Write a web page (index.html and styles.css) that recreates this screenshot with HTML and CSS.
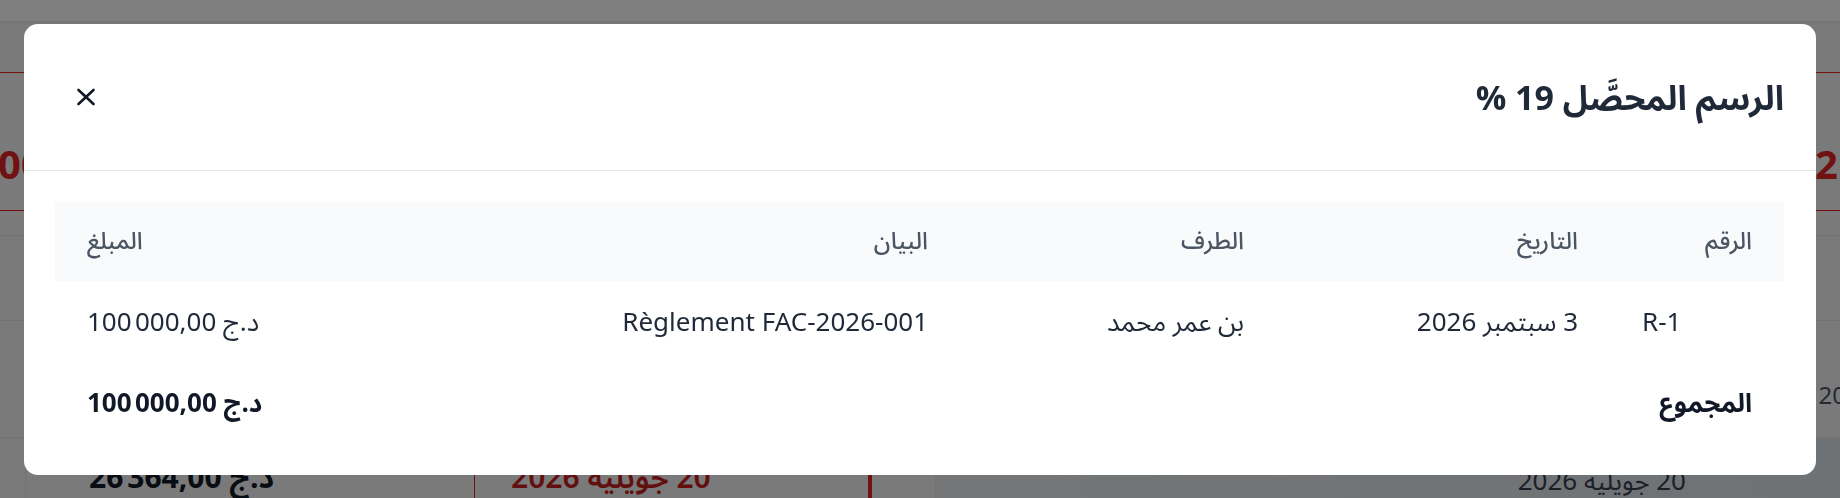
FILE: index.html
```html
<!DOCTYPE html>
<html lang="ar" dir="rtl">
<head>
<meta charset="utf-8">
<title>الرسم المحصَّل</title>
<link rel="stylesheet" href="styles.css">
</head>
<body>
	<!-- page behind the dialog -->
	<div class="page" dir="ltr">
		<div class="topbar"></div>
		<div class="kpi-band">
			<span class="kpi-left">000,00</span>
			<span class="kpi-right">12</span>
		</div>
		<div class="bg-row bg-row-a"></div>
		<div class="bg-row bg-row-b"><span class="bg-date">20</span></div>
		<div class="bg-cards">
			<div class="bg-card bg-card-total"><span dir="ltr">26&#8239;364,00 د.ج</span></div>
			<div class="bg-card bg-card-due"><span dir="rtl">20 جويلية 2026</span></div>
			<div class="bg-card bg-card-list"><span dir="rtl">20 جويلية 2026</span></div>
		</div>
	</div>

	<div class="overlay">
		<div class="modal">
			<div class="modal-head">
				<h2 class="modal-title">الرسم المحصَّل 19 %</h2>
				<button class="close-btn" type="button" aria-label="إغلاق">
					<svg width="20" height="20" viewBox="0 0 20 20" fill="none" stroke="currentColor" stroke-width="2.6" stroke-linecap="round">
						<line x1="2.5" y1="3" x2="17.5" y2="17"/>
						<line x1="17.5" y1="3" x2="2.5" y2="17"/>
					</svg>
				</button>
			</div>
			<div class="modal-body">
				<table class="tx-table">
					<colgroup>
						<col class="c-ref">
						<col class="c-date">
						<col class="c-party">
						<col class="c-label">
						<col class="c-amount">
					</colgroup>
					<thead>
						<tr>
							<th>الرقم</th>
							<th>التاريخ</th>
							<th>الطرف</th>
							<th>البيان</th>
							<th class="num">المبلغ</th>
						</tr>
					</thead>
					<tbody>
						<tr>
							<td class="ref" dir="ltr">R-1</td>
							<td>3 سبتمبر 2026</td>
							<td>بن عمر محمد</td>
							<td>Règlement FAC-2026-001</td>
							<td class="num"><span dir="ltr">100&#8239;000,00 د.ج</span></td>
						</tr>
					</tbody>
					<tfoot>
						<tr>
							<td colspan="4">المجموع</td>
							<td class="num"><span dir="ltr">100&#8239;000,00 د.ج</span></td>
						</tr>
					</tfoot>
				</table>
			</div>
		</div>
	</div>
</body>
</html>
```

FILE: styles.css
```css
html, body {
	margin: 0;
	padding: 0;
}
body {
	width: 1840px;
	height: 498px;
	overflow: hidden;
	background: #f4f4f5;
	font-family: "Noto Sans Arabic", "Noto Sans", "DejaVu Sans", sans-serif;
	color: #1f2937;
}

/* ---------- page behind the overlay ---------- */
.page {
	display: flex;
	flex-direction: column;
	height: 498px;
}
.topbar {
	height: 22px;
	background: #fff;
	box-shadow: 0 1px 3px rgba(0,0,0,.08);
}
.kpi-band {
	margin-top: 51px;
	height: 144px;
	border-top: 1px solid #e02424;
	border-bottom: 1px solid #e02424;
	display: flex;
	justify-content: space-between;
	align-items: flex-start;
	padding-top: 71px;
	box-sizing: border-box;
	font-family: "Noto Sans", sans-serif;
	font-size: 40px;
	line-height: 40px;
	font-weight: 700;
	color: #e02424;
}
.kpi-left { margin-left: -2px; }
.kpi-right { padding-right: 2px; }
.bg-row {
	border-top: 1px solid #e5e7eb;
}
.bg-row-a {
	margin-top: 24px;
	height: 89px;
}
.bg-row-b {
	height: 121px;
	display: flex;
	justify-content: flex-end;
	align-items: flex-start;
	padding-top: 57px;
	box-sizing: border-box;
}
.bg-date {
	font-family: "Noto Sans", sans-serif;
	font-size: 24px;
	color: #4b5563;
	margin-right: -6px;
}
.bg-cards {
	display: flex;
	border-top: 1px solid #e5e7eb;
	padding-left: 25px;
	height: 60px;
}
.bg-card {
	box-sizing: border-box;
	padding-top: 21px;
	font-size: 30px;
	line-height: 40px;
}
.bg-card-total {
	width: 425px;
	border-left: 1px solid #e5e7eb;
	padding-left: 63px;
	font-weight: 700;
	color: #111827;
}
.bg-card-due {
	width: 398px;
	margin-left: 24px;
	border-left: 1px solid #e02424;
	border-right: 4px solid #e02424;
	padding-left: 36px;
	color: #c81e1e;
	font-weight: 600;
}
.bg-card-list {
	flex: 1;
	margin-left: 63px;
	border-left: 1px solid #e5e7eb;
	background: linear-gradient(90deg, #e7ebee, #dfe5ea);
	display: flex;
	justify-content: flex-end;
	padding-right: 154px;
	padding-top: 24px;
	font-size: 26px;
	color: #374151;
}

/* ---------- dialog ---------- */
.overlay {
	position: fixed;
	inset: 0;
	background: rgba(0,0,0,.5);
	padding: 24px;
	display: flex;
	align-items: flex-start;
	box-sizing: border-box;
}
.modal {
	width: 100%;
	background: #fff;
	border-radius: 14px;
	overflow: hidden;
}
.modal-head {
	height: 147px;
	box-sizing: border-box;
	border-bottom: 1px solid #e5e7eb;
	padding: 0 32px;
	display: flex;
	align-items: center;
	justify-content: space-between;
}
.modal-title {
	margin: 0;
	margin-top: 4px;
	font-size: 34px;
	line-height: 44px;
	font-weight: 700;
	color: #1f2937;
}
.close-btn {
	width: 40px;
	height: 40px;
	margin-left: 10px;
	padding: 0;
	border: 0;
	background: transparent;
	color: #111827;
	display: flex;
	align-items: center;
	justify-content: center;
	cursor: pointer;
}
.modal-body {
	padding: 31px 32px 31px;
}

.tx-table {
	width: 100%;
	table-layout: fixed;
	border-collapse: collapse;
}
.c-ref { width: 174px; }
.c-date { width: 334px; }
.c-party { width: 316px; }
.c-label { width: 625px; }
.c-amount { width: 280px; }

.tx-table th {
	background: #f8fafc;
	color: #4b5563;
	font-size: 24px;
	line-height: 35px;
	font-weight: 500;
	padding: 22px 32px;
	text-align: right;
}
.tx-table td {
	font-size: 26px;
	line-height: 35px;
	padding: 24px 32px;
	text-align: right;
	color: #1f2937;
	white-space: nowrap;
}
.tx-table tfoot td {
	padding: 22px 32px 23px;
	font-weight: 700;
	color: #111827;
}
.tx-table .num { text-align: left; }
.tx-table td.ref { text-align: left; }
```
